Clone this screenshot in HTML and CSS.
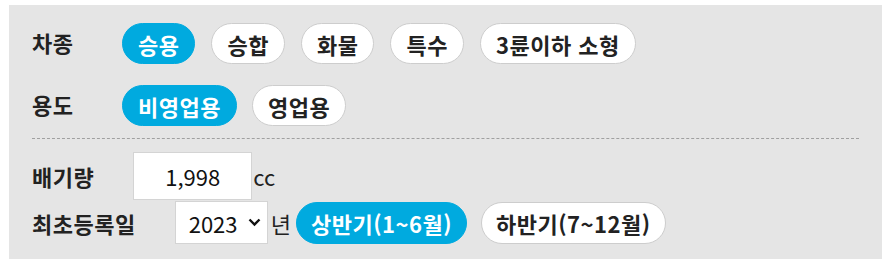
FILE: index.html
```html
<!DOCTYPE html>
<html lang="ko">
<head>
    <meta charset="UTF-8" />
    <meta name="viewport" content="width=device-width, initial-scale=1.0"/>
    <title>차량 조건</title>
    <link rel="stylesheet" href="styles.css">
</head>
<body>
    <div class="filter">
        <div class="row">
            <span class="label">차종</span>
            <div class="chips chips-wide">
                <button class="chip active">승용</button>
                <button class="chip">승합</button>
                <button class="chip">화물</button>
                <button class="chip">특수</button>
                <button class="chip">3륜이하 소형</button>
            </div>
        </div>
        <div class="row row-use">
            <span class="label">용도</span>
            <div class="chips">
                <button class="chip active">비영업용</button>
                <button class="chip">영업용</button>
            </div>
        </div>

        <div class="divider"></div>

        <div class="row row-cc">
            <span class="label label-inline">배기량</span>
            <input type="text" class="cc-input" value="1,998">
            <span class="unit">cc</span>
        </div>
        <div class="row row-date">
            <span class="label label-inline">최초등록일</span>
            <span class="select-wrap">
                <select class="year-select">
                    <option>2021</option>
                    <option>2022</option>
                    <option selected>2023</option>
                    <option>2024</option>
                </select>
                <svg class="select-arrow" width="13" height="9" viewBox="0 0 13 9">
                    <path d="M1.5 1.5 L6.5 6.5 L11.5 1.5" fill="none" stroke="#111" stroke-width="2.4"/>
                </svg>
            </span>
            <span class="unit unit-year">년</span>
            <div class="chips chips-half">
                <button class="chip active">상반기(1~6월)</button>
                <button class="chip">하반기(7~12월)</button>
            </div>
        </div>
    </div>
</body>
</html>
```

FILE: styles.css
```css
body {
    margin: 0;
    padding: 0;
    background-color: #fff;
    color: #222;
    font-family: "Noto Sans CJK KR", "Noto Sans", sans-serif;
}
.filter {
    margin: 5px 0 0 9px;
    padding: 18px 23px 15px 23px;
    background-color: #e5e5e5;
}
.row {
    display: flex;
    align-items: center;
}
.row-use {
    margin-top: 21px;
}
.label {
    width: 90px;
    flex-shrink: 0;
    font-size: 22px;
    font-weight: bold;
    letter-spacing: 0.5px;
    padding-bottom: 3px;
}
.label-inline {
    width: auto;
    margin-right: 39px;
    padding-bottom: 0;
}
.chips {
    display: flex;
    gap: 15px;
}
.chips-wide {
    gap: 16px;
}
.chip {
    height: 41px;
    padding: 0 15px;
    border: 1px solid #cdcdcd;
    border-radius: 21px;
    background: #fff;
    color: #222;
    font-family: inherit;
    font-size: 22px;
    font-weight: bold;
    letter-spacing: 0.5px;
    line-height: 1;
    cursor: pointer;
}
.chip.active {
    background: #00aadf;
    border-color: #00aadf;
    color: #fff;
}
.divider {
    margin-top: 12px;
    border-top: 1px dashed #a0a0a0;
}
.row-cc {
    margin-top: 13px;
}
.cc-input {
    box-sizing: border-box;
    width: 119px;
    height: 48px;
    border: 1px solid #d4d4d4;
    background: #fff;
    text-align: center;
    font-family: inherit;
    font-size: 22px;
    color: #111;
    padding: 0;
}
.unit {
    font-size: 22px;
    margin-left: 1px;
}
.row-date {
    margin-top: 1px;
}
.select-wrap {
    position: relative;
    display: inline-block;
}
.year-select {
    display: block;
    box-sizing: border-box;
    width: 93px;
    height: 43px;
    border: 1px solid #d4d4d4;
    border-radius: 0;
    background: #fff;
    appearance: none;
    -webkit-appearance: none;
    font-family: inherit;
    font-size: 22px;
    color: #111;
    padding: 0 0 0 13px;
}
.select-arrow {
    position: absolute;
    right: 7px;
    top: 17px;
    pointer-events: none;
}
.unit-year {
    margin: 0 5px 0 3px;
}
.chips-half {
    gap: 14px;
}
.chips-half .chip {
    height: 42px;
    padding: 0 14px;
}
```
